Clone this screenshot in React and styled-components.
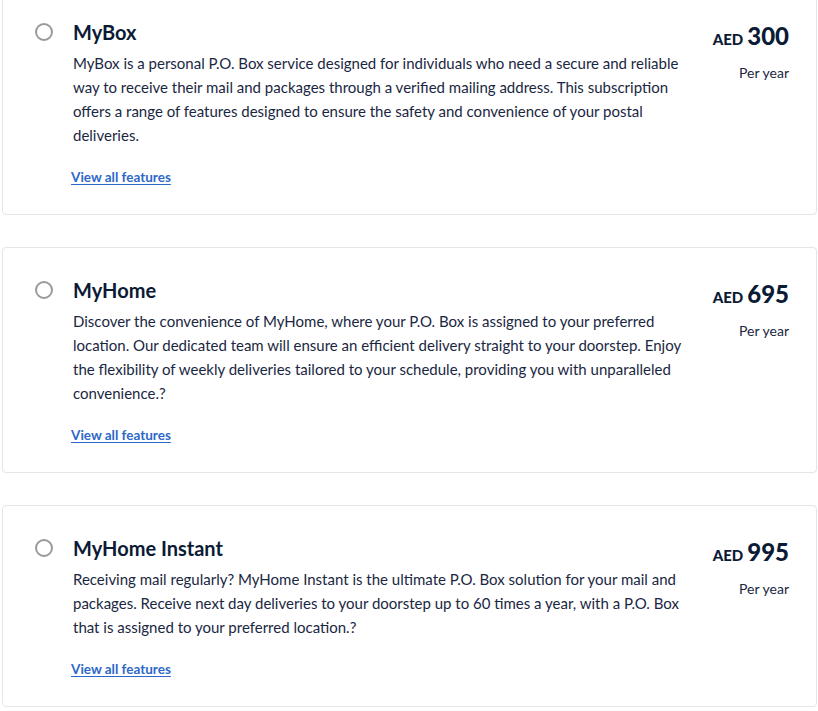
import React from 'react';
import styled, { createGlobalStyle } from 'styled-components';

const GlobalStyle = createGlobalStyle`
  body {
    margin: 0;
    background: #fff;
    font-family: Lato, "Noto Sans", sans-serif;
    color: #13203b;
  }
`;

const plans = [
  {
    id: 'mybox',
    name: 'MyBox',
    price: '300',
    text: 'MyBox is a personal P.O. Box service designed for individuals who need a secure and reliable way to receive their mail and packages through a verified mailing address. This subscription offers a range of features designed to ensure the safety and convenience of your postal deliveries.',
  },
  {
    id: 'myhome',
    name: 'MyHome',
    price: '695',
    text: 'Discover the convenience of MyHome, where your P.O. Box is assigned to your preferred location. Our dedicated team will ensure an efficient delivery straight to your doorstep. Enjoy the flexibility of weekly deliveries tailored to your schedule, providing you with unparalleled convenience.?',
  },
  {
    id: 'myhome-instant',
    name: 'MyHome Instant',
    price: '995',
    text: 'Receiving mail regularly? MyHome Instant is the ultimate P.O. Box solution for your mail and packages. Receive next day deliveries to your doorstep up to 60 times a year, with a P.O. Box that is assigned to your preferred location.?',
  },
];

const List = styled.div`
  display: flex;
  flex-direction: column;
  gap: 32px;
  margin-top: -11px;
  padding: 0 1px 0 2px;
`;

const Card = styled.label`
  display: flex;
  align-items: flex-start;
  border: 1px solid #e3e5ea;
  border-radius: 4px;
  padding: 28px 27px 27px 32px;
  cursor: pointer;
`;

const Radio = styled.span`
  flex: none;
  width: 18px;
  height: 18px;
  margin-top: 5px;
  border: 2px solid #9a9a9a;
  border-radius: 50%;
  box-sizing: border-box;
  background: #fff;
`;

const Body = styled.div`
  flex: 1;
  padding-left: 20px;
`;

const Title = styled.h3`
  margin: 0;
  font-size: 20px;
  font-weight: 700;
  line-height: 28px;
  color: #0b1a35;
`;

const Description = styled.p`
  margin: 5px 0 0;
  width: 622px;
  font-size: 15px;
  line-height: 24px;
  color: #1a2742;
`;

const FeaturesLink = styled.a`
  display: inline-block;
  margin: 20px 0 0 -2px;
  font-size: 13.5px;
  font-weight: 700;
  line-height: 20px;
  color: #2d68c8;
  text-decoration: underline;
  text-underline-offset: 2px;
`;

const PriceCol = styled.div`
  flex: none;
  display: flex;
  flex-direction: column;
  align-items: flex-end;
  padding-top: 3px;
`;

const Price = styled.div`
  font-weight: 900;
  color: #0b1a35;
  line-height: 30px;
  white-space: nowrap;
`;

const Currency = styled.span`
  font-size: 15px;
  margin-right: 4px;
`;

const Amount = styled.span`
  font-size: 24px;
`;

const Period = styled.div`
  margin-top: 9px;
  font-size: 14px;
  line-height: 20px;
  color: #1a2742;
`;

export default function App() {
  return (
    <>
      <GlobalStyle />
      <List>
        {plans.map((p) => (
          <Card key={p.id}>
            <Radio />
            <Body>
              <Title>{p.name}</Title>
              <Description>{p.text}</Description>
              <FeaturesLink href="#">View all features</FeaturesLink>
            </Body>
            <PriceCol>
              <Price>
                <Currency>AED</Currency>
                <Amount>{p.price}</Amount>
              </Price>
              <Period>Per year</Period>
            </PriceCol>
          </Card>
        ))}
      </List>
    </>
  );
}
